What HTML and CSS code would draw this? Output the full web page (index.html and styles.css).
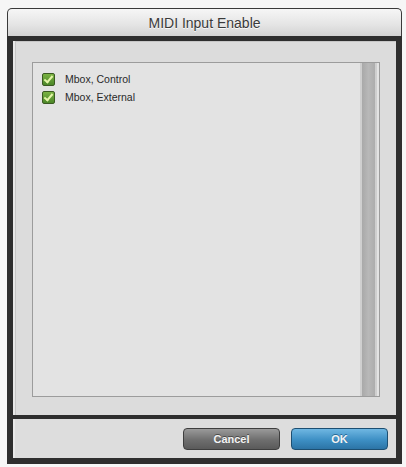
FILE: index.html
```html
<!DOCTYPE html>
<html lang="en">
<head>
    <meta charset="UTF-8">
    <title>MIDI Input Enable</title>
    <link rel="stylesheet" href="styles.css">
</head>
<body>

    <div class="window">
        <div class="title-bar">MIDI Input Enable</div>

        <div class="frame">
            <!-- Список пристроїв -->
            <div class="panel">
                <div class="list-box">
                    <ul class="device-list">
                        <li><span class="check"></span>Mbox, Control</li>
                        <li><span class="check"></span>Mbox, External</li>
                    </ul>
                    <div class="scroll-track"><div class="scroll-bar"></div></div>
                </div>
            </div>

            <!-- Кнопки -->
            <div class="button-bar">
                <button class="btn btn-cancel">Cancel</button>
                <button class="btn btn-ok">OK</button>
            </div>
        </div>
    </div>

</body>
</html>
```

FILE: styles.css
```css
body {
    margin: 0;
    padding: 8px 0 0 7px;
    background-color: #f6f6f6;
    font-family: "Liberation Sans", Arial, sans-serif;
}

.window {
    width: 395px;
}

.title-bar {
    height: 27px;
    line-height: 28px;
    text-align: center;
    font-size: 14px;
    color: #3a3a3a;
    background: linear-gradient(#f6f6f6, #e4e4e4 60%, #d2d2d2);
    border: 1px solid #3a3a3a;
    border-bottom: none;
    border-radius: 5px 5px 0 0;
    text-shadow: 0 1px 0 #fafafa;
}

.frame {
    background-color: #2e2e2e;
    padding: 5px 6px 6px 6px;
}

.panel {
    height: 374px;
    box-sizing: border-box;
    padding: 21px 16px 18px 17px;
    background-color: #dcdcdc;
    border-left: 2px solid #e8e8e8;
    box-shadow: inset 1px 1px 0 #c6c6c6;
}

.list-box {
    display: flex;
    height: 100%;
    box-sizing: border-box;
    background-color: #e3e3e3;
    border: 1px solid #9c9c9c;
}

.device-list {
    flex: 1;
    list-style: none;
    margin: 0;
    padding: 7px 0 0 9px;
}

.device-list li {
    display: flex;
    align-items: center;
    height: 18px;
    font-size: 10.5px;
    color: #2a2a2a;
}

.check {
    width: 13px;
    height: 13px;
    box-sizing: border-box;
    margin-right: 10px;
    border: 1px solid #3b5a22;
    border-radius: 2px;
    background: linear-gradient(#7ab243, #4c8728);
    position: relative;
}

.check::after {
    content: "";
    position: absolute;
    left: 3px;
    top: 0px;
    width: 3px;
    height: 7px;
    border: solid #e4f5a8;
    border-width: 0 2px 2px 0;
    transform: rotate(40deg);
}

.scroll-track {
    width: 17px;
    margin-right: 2px;
    background-color: #cfcfcf;
    display: flex;
    justify-content: center;
}

.scroll-bar {
    width: 13px;
    background: linear-gradient(90deg, #a9a9a9, #b8b8b8 50%, #adadad);
}

.button-bar {
    display: flex;
    justify-content: flex-end;
    gap: 11px;
    height: 39px;
    box-sizing: border-box;
    margin-top: 4px;
    padding: 9px 8px 0 0;
    background-color: #dddddd;
    border-left: 2px solid #e9e9e9;
}

.btn {
    width: 97px;
    height: 22px;
    border-radius: 4px;
    font-family: "Liberation Sans", Arial, sans-serif;
    font-size: 11px;
    font-weight: bold;
    color: #f4f4f4;
    cursor: pointer;
}

.btn-cancel {
    border: 1px solid #3e3e3e;
    background: linear-gradient(#9a9a9a, #6e6e6e 55%, #5a5a5a);
    text-shadow: 0 -1px 0 #4a4a4a;
}

.btn-ok {
    border: 1px solid #1d4f72;
    background: linear-gradient(#6fb7e2, #3d8fc4 55%, #2c74a6);
    text-shadow: 0 -1px 0 #2a6a96;
}
```
